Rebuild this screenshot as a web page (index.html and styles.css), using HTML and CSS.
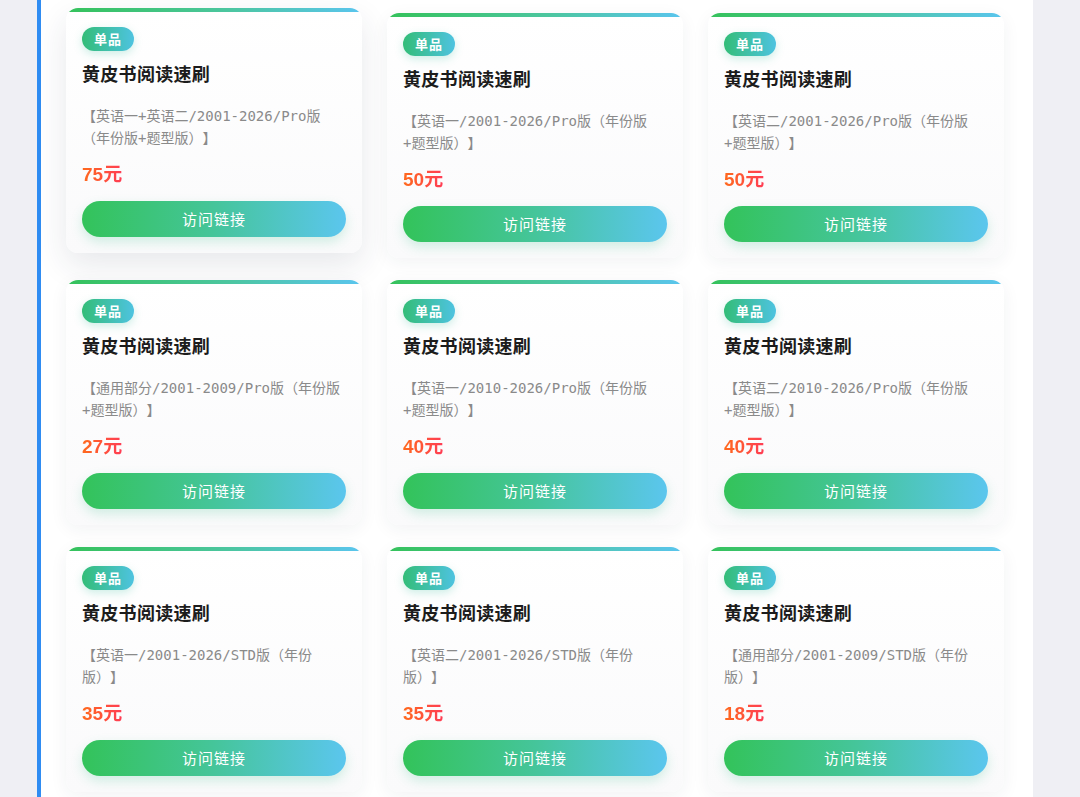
FILE: index.html
```html
<!DOCTYPE html>
<html lang="zh-CN">
<head>
<meta charset="utf-8">
<title>黄皮书阅读速刷</title>
<link rel="stylesheet" href="styles.css">
</head>
<body>
<div class="page">
  <main class="panel">
    <div class="grid">
      <div class="card is-hover">
        <span class="badge">单品</span>
        <h3 class="title">黄皮书阅读速刷</h3>
        <p class="desc">【英语一+英语二/2001-2026/Pro版（年份版+题型版）】</p>
        <div class="price">75元</div>
        <a class="btn">访问链接</a>
      </div>
      <div class="card">
        <span class="badge">单品</span>
        <h3 class="title">黄皮书阅读速刷</h3>
        <p class="desc">【英语一/2001-2026/Pro版（年份版+题型版）】</p>
        <div class="price">50元</div>
        <a class="btn">访问链接</a>
      </div>
      <div class="card">
        <span class="badge">单品</span>
        <h3 class="title">黄皮书阅读速刷</h3>
        <p class="desc">【英语二/2001-2026/Pro版（年份版+题型版）】</p>
        <div class="price">50元</div>
        <a class="btn">访问链接</a>
      </div>
      <div class="card">
        <span class="badge">单品</span>
        <h3 class="title">黄皮书阅读速刷</h3>
        <p class="desc">【通用部分/2001-2009/Pro版（年份版+题型版）】</p>
        <div class="price">27元</div>
        <a class="btn">访问链接</a>
      </div>
      <div class="card">
        <span class="badge">单品</span>
        <h3 class="title">黄皮书阅读速刷</h3>
        <p class="desc">【英语一/2010-2026/Pro版（年份版+题型版）】</p>
        <div class="price">40元</div>
        <a class="btn">访问链接</a>
      </div>
      <div class="card">
        <span class="badge">单品</span>
        <h3 class="title">黄皮书阅读速刷</h3>
        <p class="desc">【英语二/2010-2026/Pro版（年份版+题型版）】</p>
        <div class="price">40元</div>
        <a class="btn">访问链接</a>
      </div>
      <div class="card">
        <span class="badge">单品</span>
        <h3 class="title">黄皮书阅读速刷</h3>
        <p class="desc">【英语一/2001-2026/STD版（年份版）】</p>
        <div class="price">35元</div>
        <a class="btn">访问链接</a>
      </div>
      <div class="card">
        <span class="badge">单品</span>
        <h3 class="title">黄皮书阅读速刷</h3>
        <p class="desc">【英语二/2001-2026/STD版（年份版）】</p>
        <div class="price">35元</div>
        <a class="btn">访问链接</a>
      </div>
      <div class="card">
        <span class="badge">单品</span>
        <h3 class="title">黄皮书阅读速刷</h3>
        <p class="desc">【通用部分/2001-2009/STD版（年份版）】</p>
        <div class="price">18元</div>
        <a class="btn">访问链接</a>
      </div>
    </div>
  </main>
</div>
</body>
</html>
```
FILE: styles.css
```css
* { box-sizing: border-box; }

html, body {
  margin: 0;
  padding: 0;
  background: #efeff4;
  font-family: "Noto Sans CJK SC", "Noto Sans", sans-serif;
}

.page {
  padding-left: 37px;
  height: 797px;
  overflow: hidden;
}

.panel {
  width: 996px;
  min-height: 797px;
  background: #ffffff;
  border-left: 4px solid #2f8cf2;
  padding: 13px 29px 25px 25px;
}

.grid {
  display: grid;
  grid-template-columns: repeat(3, 296px);
  column-gap: 25px;
  row-gap: 22px;
}

.card {
  position: relative;
  height: 245px;
  padding: 19px 16px 16px;
  border-radius: 12px;
  overflow: hidden;
  background: linear-gradient(180deg, #ffffff 0%, #fafafb 100%);
  box-shadow: 0 4px 18px rgba(40, 50, 70, 0.06);
  display: flex;
  flex-direction: column;
  align-items: flex-start;
}

.card::before {
  content: "";
  position: absolute;
  left: 0;
  right: 0;
  top: 0;
  height: 4px;
  background: linear-gradient(90deg, #35c25b 0%, #4cc6a0 55%, #5ac5ee 100%);
}

.card.is-hover {
  transform: translateY(-5px);
  box-shadow: 0 12px 32px rgba(40, 50, 70, 0.11);
}

.badge {
  display: inline-block;
  height: 24px;
  line-height: 24px;
  padding: 0 12px;
  border-radius: 12px;
  font-size: 13px;
  font-weight: 700;
  letter-spacing: 1px;
  color: #ffffff;
  background: linear-gradient(90deg, #33bd78 0%, #4ec3e0 100%);
  box-shadow: 0 3px 8px rgba(60, 190, 160, 0.25);
}

.title {
  margin: 10px 0 0;
  font-size: 18px;
  line-height: 24px;
  font-weight: 700;
  color: #1c1c1c;
  letter-spacing: 0.3px;
}

.desc {
  margin: 20px 0 0;
  padding-right: 4px;
  width: 100%;
  font-family: "DejaVu Sans Mono", "Noto Sans CJK SC", monospace;
  font-size: 14px;
  line-height: 22px;
  color: #8a8a8a;
  height: 44px;
  text-spacing-trim: space-all;
}

.price {
  margin-top: 14px;
  font-family: "Liberation Sans", "Noto Sans CJK SC", sans-serif;
  font-size: 19px;
  line-height: 24px;
  font-weight: 700;
  background: linear-gradient(90deg, #ff6a1c 0%, #ff3d55 100%);
  -webkit-background-clip: text;
  background-clip: text;
  color: transparent;
}

.btn {
  margin-top: 14px;
  width: 100%;
  height: 36px;
  line-height: 36px;
  border-radius: 18px;
  text-align: center;
  font-size: 15px;
  letter-spacing: 1px;
  color: #ffffff;
  background: linear-gradient(90deg, #33c35a 0%, #45c59a 50%, #5bc6ee 100%);
  box-shadow: 0 5px 12px rgba(60, 190, 140, 0.22);
}
```
